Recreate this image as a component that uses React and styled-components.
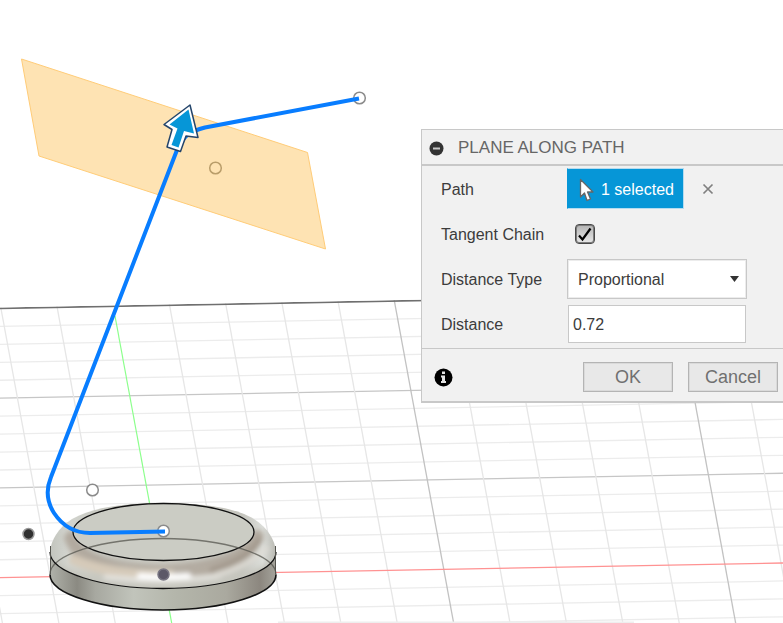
import React, { useState } from "react";
import styled, { createGlobalStyle } from "styled-components";

const GlobalStyle = createGlobalStyle`
  *, *::before, *::after { box-sizing: border-box; }
  body {
    margin: 0;
    background: #fff;
    color: #3c3c3c;
    font-family: "Liberation Sans", Arial, sans-serif;
    font-size: 16px;
    line-height: 20px;
  }
  button, input, select { font: inherit; color: inherit; }
`;

const Workspace = styled.main`
  display: grid;
  min-height: 100vh;
  overflow: hidden;
`;

const Canvas = styled.svg`
  grid-area: 1 / 1;
  width: 100%;
  height: 100vh;
  display: block;
`;

const Dialog = styled.form`
  grid-area: 1 / 1;
  place-self: start end;
  z-index: 1;
  width: 362px;
  max-width: 100%;
  margin-top: 129px;
  background: #f1f1f1;
  border: solid #c8c8c8;
  border-width: 1px 0 2px 1px;
`;

const Header = styled.header`
  display: flex;
  align-items: center;
  gap: 14px;
  padding: 8px 8px 6px 7px;
  border-bottom: 2px solid #c8c8c8;
`;

const Title = styled.h1`
  margin: 0;
  color: #666;
  font-size: 17px;
  font-weight: 400;
`;

const IconButton = styled.button`
  display: grid;
  place-items: center;
  padding: 0;
  border: 0;
  background: none;
  color: #808080;
  cursor: pointer;
`;

const Fields = styled.div`
  padding-bottom: 2px;
  border-bottom: 1px solid #c8c8c8;
`;

const Field = styled.div`
  display: grid;
  grid-template-columns: 126px 1fr;
  align-items: center;
  height: 45px;
  padding: 0 36px 0 19px;
`;

const Label = styled.label`
  padding-top: 2px;
  white-space: nowrap;
`;

const Selection = styled.div`
  display: flex;
  align-items: center;
  gap: 18px;
`;

const SelectionButton = styled.button`
  display: flex;
  align-items: center;
  gap: 7px;
  height: 41px;
  padding: 2px 9px 0 11px;
  border: 1px solid #b5dcf0;
  border-left-color: #0696d7;
  background: #0696d7;
  color: #fff;
  white-space: nowrap;
`;

const Check = styled.input`
  appearance: none;
  width: 20px;
  height: 20px;
  margin: 0 0 0 8px;
  border: 1px solid #484848;
  box-shadow: inset 0 0 0 1px #7c7c7c;
  border-radius: 4px;
  background: linear-gradient(#b4b4b4, #e8e8e8);
`;

const CheckBox = styled.span`
  display: grid;
  justify-content: start;
  & > * { grid-area: 1 / 1; }
  svg { margin-left: 8px; pointer-events: none; }
  input:not(:checked) + svg { visibility: hidden; }
`;

const SelectBox = styled.span`
  display: grid;
  align-items: center;
  & > * { grid-area: 1 / 1; }
  svg { justify-self: end; margin-right: 8px; pointer-events: none; }
`;

const Select = styled.select`
  appearance: none;
  width: 100%;
  height: 40px;
  padding: 2px 24px 0 10px;
  border: 1px solid #c8c8c8;
  box-shadow: inset 0 0 0 1px #ececec;
  border-radius: 0;
  background: #fff;
`;

const NumberInput = styled.input`
  min-width: 0;
  height: 38px;
  margin: 0 1px;
  padding: 2px 4px 0;
  border: 1px solid #c8c8c8;
  background: #fff;
`;

const Footer = styled.footer`
  display: flex;
  align-items: center;
  gap: 15px;
  padding: 13px 5px 9px 12px;
`;

const InfoButton = styled(IconButton)`
  margin-right: auto;
`;

const ActionButton = styled.button`
  width: 90px;
  height: 30px;
  padding: 0;
  border: 1px solid #b4b4b4;
  box-shadow: inset 0 0 0 1px #dadada;
  background: #e8e8e8;
  color: #707070;
  font-size: 18px;
`;

const SLOPE = 0.0188;
const LEAN = 0.184;
const rows = Array.from({ length: 19 }, (_, i) => i - 4);
const columns = Array.from({ length: 18 }, (_, i) => i - 4);

function GroundGrid() {
  return (
    <g clipPath="url(#ground)" fill="none">
      {rows.map((k) => {
        const y = 577.7 - k * 17.95;
        return k === 0 ? null : (
          <path
            key={k}
            d={`M0 ${y}L783 ${y - 783 * SLOPE}`}
            stroke={k % 5 === 0 ? "#c6c6c6" : "#ececec"}
            strokeWidth="1.3"
          />
        );
      })}
      {columns.map((k) => {
        const x = 130.6 + k * 56.4;
        return k === 0 ? null : (
          <path
            key={k}
            d={`M${x - 120 * LEAN} 280L${x + 240 * LEAN} 640`}
            stroke={k % 5 === 0 ? "#c2c2c2" : "#e6e6e6"}
            strokeWidth="1.3"
          />
        );
      })}
      <path d="M115 316L174.8 640" stroke="#8cff8c" strokeWidth="1.2" />
      <path d="M0 577.7L783 563" stroke="#ff9292" strokeWidth="1.3" />
      <path d="M0 308.4L783 293.7" stroke="#6f6f6f" strokeWidth="1.6" />
      <path d="M278 622.5H634" stroke="#eee" strokeWidth="2" />
    </g>
  );
}

const BEVEL = "M50 552C51 540 58 528 72 519C91 508 121 503 163 503S236 508 254 519C268 528 275 540 276 552C276 572 225 588.5 163 588.5S50 572 50 552Z";

function Puck() {
  return (
    <g>
      <path d="M50 552V574.5C50 594 101 610 163 610S276 594 276 574.5V552Z" fill="url(#side)" />
      <path d={BEVEL} fill="url(#bevel)" />
      <g clipPath="url(#bevelShape)">
        <g filter="url(#soft)" fill="none" strokeLinecap="round">
          <path d="M70 538Q84 575 163 576Q241 573 258 536" stroke="#b3aba0" strokeWidth="12" />
          <path d="M74 560Q112 576 170 575" stroke="#d6cab9" strokeWidth="10" />
          <path d="M70 532Q84 566 163 567Q241 564 257 532" stroke="#aea69b" strokeWidth="4" />
          <path d="M212 570Q246 560 260 540" stroke="#a0968a" strokeWidth="5" />
          <path d="M54 566Q92 588 163 590Q235 588 272 566" stroke="#c6c6be" strokeWidth="9" />
          <path d="M106 577Q163 583 218 576" stroke="#e4e3de" strokeWidth="5" />
          <path d="M140 576Q163 578 188 576" stroke="#fff" strokeWidth="6" />
          <path d="M216 575Q246 567 266 549" stroke="#dedcd5" strokeWidth="5" />
        </g>
      </g>
      <ellipse cx="163.5" cy="532" rx="90.5" ry="28.5" fill="#cbccc4" stroke="#111" strokeWidth="1.3" />
      <path d="M50 574.5C50 555 101 538.5 163 538.5S276 555 276 574.5" fill="none" stroke="#55554f" strokeOpacity=".75" strokeWidth="1.3" />
      <path d="M50 552C50 572 101 588.5 163 588.5S276 572 276 552" fill="none" stroke="#111" strokeWidth="1.3" />
      <path d="M50 574.5C50 594 101 610 163 610S276 594 276 574.5" fill="none" stroke="#111" strokeWidth="1.6" />
      <path d="M50.5 546V574M275.5 546V574" stroke="#55554f" />
    </g>
  );
}

function Scene() {
  return (
    <Canvas viewBox="0 0 783 623" preserveAspectRatio="xMinYMin slice" role="img" aria-label="Construction plane on a sketch path">
      <defs>
        <clipPath id="ground"><path d="M0 307.6L783 293V640H0Z" /></clipPath>
        <clipPath id="bevelShape"><path d={BEVEL} /></clipPath>
        <filter id="soft" x="-20%" y="-40%" width="140%" height="180%"><feGaussianBlur stdDeviation="2.6" /></filter>
        <linearGradient id="side">
          <stop offset="0" stopColor="#b0b2aa" />
          <stop offset=".12" stopColor="#8b8a82" />
          <stop offset=".2" stopColor="#a7a8a0" />
          <stop offset=".37" stopColor="#c1c4bb" />
          <stop offset=".55" stopColor="#b4b6ab" />
          <stop offset=".78" stopColor="#aaa99f" />
          <stop offset=".93" stopColor="#8c877f" />
          <stop offset="1" stopColor="#a5a49c" />
        </linearGradient>
        <linearGradient id="bevel">
          <stop offset="0" stopColor="#c2c4bd" />
          <stop offset=".08" stopColor="#d3d5cf" />
          <stop offset=".2" stopColor="#c8c9c2" />
          <stop offset=".5" stopColor="#cccbc3" />
          <stop offset=".85" stopColor="#c4c4bd" />
          <stop offset=".94" stopColor="#dcdeda" />
          <stop offset="1" stopColor="#b9b9b2" />
        </linearGradient>
      </defs>
      <GroundGrid />
      <Puck />
      <path d="M21.5 59L307.5 152.5L325.5 249L39 156Z" fill="#fee3b3" stroke="#ffcc78" />
      <circle cx="215.5" cy="168" r="5.8" fill="none" stroke="#b99d6a" strokeWidth="1.5" />
      <g fill="#fff" stroke="#8b8b8b" strokeWidth="1.5">
        <circle cx="359.5" cy="98" r="5.8" />
        <circle cx="92.5" cy="490" r="5.8" />
        <circle cx="163.5" cy="531" r="5.8" />
      </g>
      <circle cx="28.5" cy="534" r="5.5" fill="#303030" stroke="#999" strokeWidth="1.5" />
      <circle cx="163.5" cy="574.5" r="5.5" fill="#5c5867" stroke="#777481" strokeWidth="1.5" />
      <path
        d="M359 98.5L205 127.5C192 131 185 133 177 150L51 477C46 489 47 502 54 513C62 525 74 533 90 533L165 531.5"
        fill="none"
        stroke="#087dff"
        strokeWidth="4"
        strokeLinejoin="round"
      />
      <path d="M190 105L164 124.5L172 129.5L167 147L180.5 151.5L186 136L198 137.5Z" fill="#fff" stroke="#24456b" strokeWidth="1.5" strokeLinejoin="round" />
      <path d="M188.5 109.5L169.5 124.5L177.5 128.5L171.5 145L178.5 147.5L184 131L194 133.5Z" fill="#0696d7" />
    </Canvas>
  );
}

function CollapseIcon() {
  return (
    <svg width="15" height="15" viewBox="0 0 15 15" aria-hidden="true">
      <circle cx="7.5" cy="7.5" r="7" fill="#333" />
      <path d="M4 7.5H11" stroke="#c8c8c8" strokeWidth="2" />
    </svg>
  );
}

function PointerIcon() {
  return (
    <svg width="15" height="24" viewBox="0 0 15 24" aria-hidden="true">
      <path d="M1.5 1.5V19L5.5 15L8 22.5L11.5 21L8.5 14H14Z" fill="#fff" stroke="#666" strokeWidth="1.3" strokeLinejoin="round" />
    </svg>
  );
}

function InfoIcon() {
  return (
    <svg width="19" height="19" viewBox="0 0 19 19" aria-hidden="true">
      <circle cx="9.5" cy="9.5" r="9" fill="#000" />
      <path d="M8 3.5H11V6H8ZM7 7.5H11V13H12V15H7V13H8V9.5H7Z" fill="#e4e4e4" />
    </svg>
  );
}

export default function App() {
  const [tangent, setTangent] = useState(true);
  const [type, setType] = useState("Proportional");
  const [distance, setDistance] = useState("0.72");

  return (
    <>
      <GlobalStyle />
      <Workspace>
        <Scene />
        <Dialog aria-labelledby="dialog-title" onSubmit={(e) => e.preventDefault()}>
          <Header>
            <IconButton type="button" aria-label="Collapse"><CollapseIcon /></IconButton>
            <Title id="dialog-title">PLANE ALONG PATH</Title>
          </Header>
          <Fields>
            <Field>
              <Label htmlFor="path">Path</Label>
              <Selection>
                <SelectionButton id="path" type="button"><PointerIcon />1 selected</SelectionButton>
                <IconButton type="button" aria-label="Clear selection">
                  <svg width="12" height="12" viewBox="0 0 12 12" aria-hidden="true">
                    <path d="M1.5 1.5L10.5 10.5M10.5 1.5L1.5 10.5" stroke="currentColor" strokeWidth="1.7" />
                  </svg>
                </IconButton>
              </Selection>
            </Field>
            <Field>
              <Label htmlFor="tangent">Tangent Chain</Label>
              <CheckBox>
                <Check id="tangent" type="checkbox" checked={tangent} onChange={(e) => setTangent(e.target.checked)} />
                <svg width="20" height="20" viewBox="0 0 20 20" aria-hidden="true">
                  <path d="M4 11.5L7.5 15.5L15.5 4.5" fill="none" stroke="#000" strokeWidth="2.2" />
                </svg>
              </CheckBox>
            </Field>
            <Field>
              <Label htmlFor="type">Distance Type</Label>
              <SelectBox>
                <Select id="type" value={type} onChange={(e) => setType(e.target.value)}>
                  <option>Proportional</option>
                  <option>Physical</option>
                </Select>
                <svg width="9" height="6" viewBox="0 0 9 6" aria-hidden="true"><path d="M0 0H9L4.5 6Z" fill="#333" /></svg>
              </SelectBox>
            </Field>
            <Field>
              <Label htmlFor="distance">Distance</Label>
              <NumberInput id="distance" type="text" inputMode="decimal" value={distance} onChange={(e) => setDistance(e.target.value)} />
            </Field>
          </Fields>
          <Footer>
            <InfoButton type="button" aria-label="Information"><InfoIcon /></InfoButton>
            <ActionButton type="submit">OK</ActionButton>
            <ActionButton type="button">Cancel</ActionButton>
          </Footer>
        </Dialog>
      </Workspace>
    </>
  );
}
